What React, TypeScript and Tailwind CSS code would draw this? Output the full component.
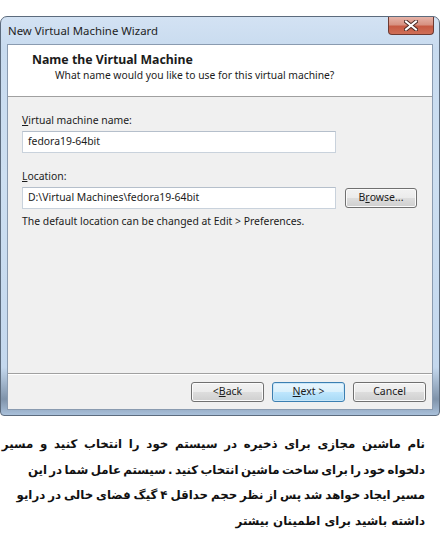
import React from "react";

const ui = { fontFamily: '"Noto Sans", "Open Sans", sans-serif' };

const WinButton = ({
  children,
  primary,
  className = "",
}: {
  children: React.ReactNode;
  primary?: boolean;
  className?: string;
}) => (
  <div
    className={`h-[20px] flex items-center justify-center rounded-[3px] border text-[10.5px] text-[#1b1b1b] ${
      primary
        ? "border-[#3c7fb1] bg-[linear-gradient(#eaf6fd_0%,#d9f0fc_50%,#bee6fd_51%,#a7d9f5_100%)] shadow-[inset_0_0_0_1px_#c8e6f8]"
        : "border-[#707070] bg-[linear-gradient(#f2f2f2_0%,#ebebeb_50%,#dddddd_51%,#cfcfcf_100%)] shadow-[inset_0_0_0_1px_#fbfbfb]"
    } ${className}`}
  >
    {children}
  </div>
);

const TextField = ({ value }: { value: string }) => (
  <div className="w-[314px] h-[22px] bg-white border border-[#c9d2dc] border-t-[#b5bfcb] flex items-center px-[5px] text-[10.4px] text-[#1b1b1b]">
    {value}
  </div>
);

export default function App() {
  return (
    <div className="w-[442px] h-[550px] bg-white overflow-hidden" style={ui}>
      {/* Wizard window */}
      <div className="mt-[16px] w-[440px] h-[400px] flex flex-col rounded-t-[7px] rounded-b-[4px] border border-[#5c6b7d] bg-[linear-gradient(180deg,#d3e2f3_0%,#c8dbef_8%,#cddff1_40%,#c4d8ee_88%,#7f93aa_96%,#a9c0da_100%)]">
        {/* Title bar */}
        <div className="h-[27px] flex items-start justify-between">
          <div className="pl-[7px] pt-[8px] text-[11.4px] text-[#1e1e1e] leading-none">
            New Virtual Machine Wizard
          </div>
          <div className="mr-[5px] w-[46px] h-[18px] rounded-b-[4px] border border-[#6d3a32] border-t-0 bg-[linear-gradient(#e6b3a8_0%,#d79282_45%,#c65a43_55%,#cf6f57_100%)] flex items-center justify-center">
            <svg width="14" height="11" viewBox="0 0 14 11">
              <path d="M2 1.5 L12 9.5 M12 1.5 L2 9.5" stroke="#4a2a25" strokeWidth="4" strokeLinecap="square" />
              <path d="M2 1.5 L12 9.5 M12 1.5 L2 9.5" stroke="#ffffff" strokeWidth="2" strokeLinecap="square" />
            </svg>
          </div>
        </div>

        {/* Client area */}
        <div className="mx-[6px] h-[366px] flex flex-col bg-[#f0f0f0] border border-[#8a9bb0]">
          {/* Header */}
          <div className="h-[52px] bg-white border-b border-[#a0a0a0] pt-[7px] text-[#1b1b1b]">
            <div className="pl-[24px] font-bold text-[12.3px] leading-[16px]">Name the Virtual Machine</div>
            <div className="pl-[47px] text-[10.3px] leading-[15px]">What name would you like to use for this virtual machine?</div>
          </div>

          {/* Body */}
          <div className="flex-1 flex flex-col px-[14px] pt-[16px] text-[10.4px] text-[#1b1b1b]">
            <div className="leading-[14px] mb-[4px]">
              <span className="underline">V</span>irtual machine name:
            </div>
            <TextField value="fedora19-64bit" />
            <div className="leading-[14px] mt-[16px] mb-[4px]">
              <span className="underline">L</span>ocation:
            </div>
            <div className="flex items-center gap-[9px]">
              <TextField value="D:\Virtual Machines\fedora19-64bit" />
              <WinButton className="w-[72px]">
                B<span className="underline">r</span>owse...
              </WinButton>
            </div>
            <div className="leading-[14px] mt-[5px]">
              The default location can be changed at Edit &gt; Preferences.
            </div>
          </div>

          {/* Footer */}
          <div className="h-[36px] border-t border-[#a0a0a0] shadow-[inset_0_1px_0_#ffffff] flex items-start justify-end gap-[8px] pt-[8px] pr-[6px]">
            <WinButton className="w-[73px]">
              &lt; <span className="underline">B</span>ack
            </WinButton>
            <WinButton primary className="w-[73px]">
              <span className="underline">N</span>ext &gt;
            </WinButton>
            <WinButton className="w-[73px]">Cancel</WinButton>
          </div>
        </div>
      </div>

      {/* Persian caption */}
      <div
        dir="rtl"
        className="mt-[16px] pr-[17px] text-[11.8px] font-bold leading-[25.5px] text-[#111] whitespace-nowrap"
        style={{ fontFamily: '"DejaVu Sans", sans-serif' }}
      >
        <div className="[word-spacing:2.6px]">نام ماشین مجازی برای ذخیره در سیستم خود را انتخاب کنید و مسیر</div>
        <div className="[word-spacing:-1.8px]">دلخواه خود را برای ساخت ماشین انتخاب کنید . سیستم عامل شما در این</div>
        <div className="[word-spacing:-1.2px]">مسیر ایجاد خواهد شد پس از نظر حجم حداقل ۴ گیگ فضای خالی در درایو</div>
        <div>داشته باشید برای اطمینان بیشتر</div>
      </div>
    </div>
  );
}
